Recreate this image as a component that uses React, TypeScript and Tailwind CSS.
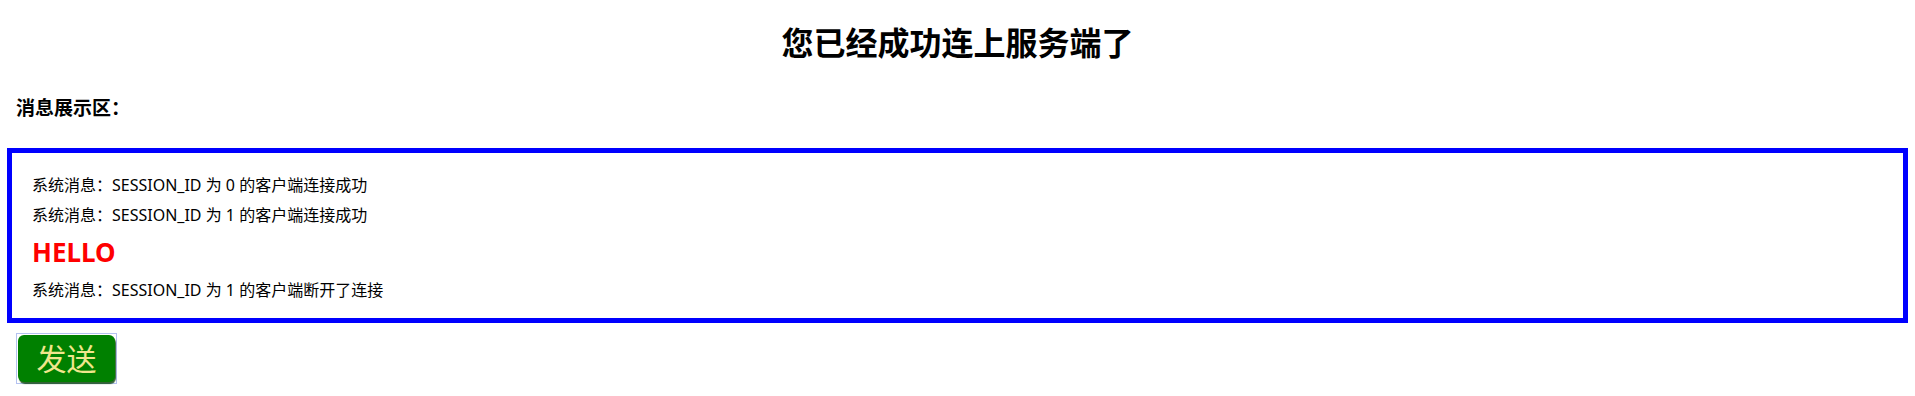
import React from 'react';

const messages: { text: string; highlight?: boolean }[] = [
  { text: '系统消息：SESSION_ID 为 0 的客户端连接成功' },
  { text: '系统消息：SESSION_ID 为 1 的客户端连接成功' },
  { text: 'HELLO', highlight: true },
  { text: '系统消息：SESSION_ID 为 1 的客户端断开了连接' },
];

const App: React.FC = () => {
  return (
    <div className="w-[1915px] h-[396px] bg-white text-black font-['Noto_Sans','Noto_Sans_CJK_SC',sans-serif] overflow-hidden">
      <h2 className="pt-[25px] text-center text-[32px] leading-[36px] font-bold">
        您已经成功连上服务端了
      </h2>

      <h4 className="mt-[36px] ml-[16px] text-[19px] leading-[22px] font-bold">
        消息展示区：
      </h4>

      {/* message panel */}
      <div className="mt-[29px] mx-[7px] h-[175px] border-[5px] border-[#0000ff] pl-[20px] pt-[22px]">
        {messages.map((m, i) =>
          m.highlight ? (
            <p key={i} className="mt-[12px] text-[26px] leading-[30px] font-bold text-[#ff0000]">
              {m.text}
            </p>
          ) : (
            <p key={i} className={`${i === 0 ? '' : i === 3 ? 'mt-[13px]' : 'mt-[10px]'} text-[16px] leading-[20px]`}>
              {m.text}
            </p>
          )
        )}
      </div>

      <div className="mt-[10px] ml-[16px] w-[101px] h-[51px] border border-[#b4c2f0] p-[1px]">
        <button
          type="button"
          className="w-full h-full rounded-[6px] bg-[#008000] shadow-[1px_2px_1px_rgba(0,60,0,0.8)] text-[#f0e68c] text-[30px] leading-[36px] flex items-center justify-center"
        >
          发送
        </button>
      </div>
    </div>
  );
};

export default App;
